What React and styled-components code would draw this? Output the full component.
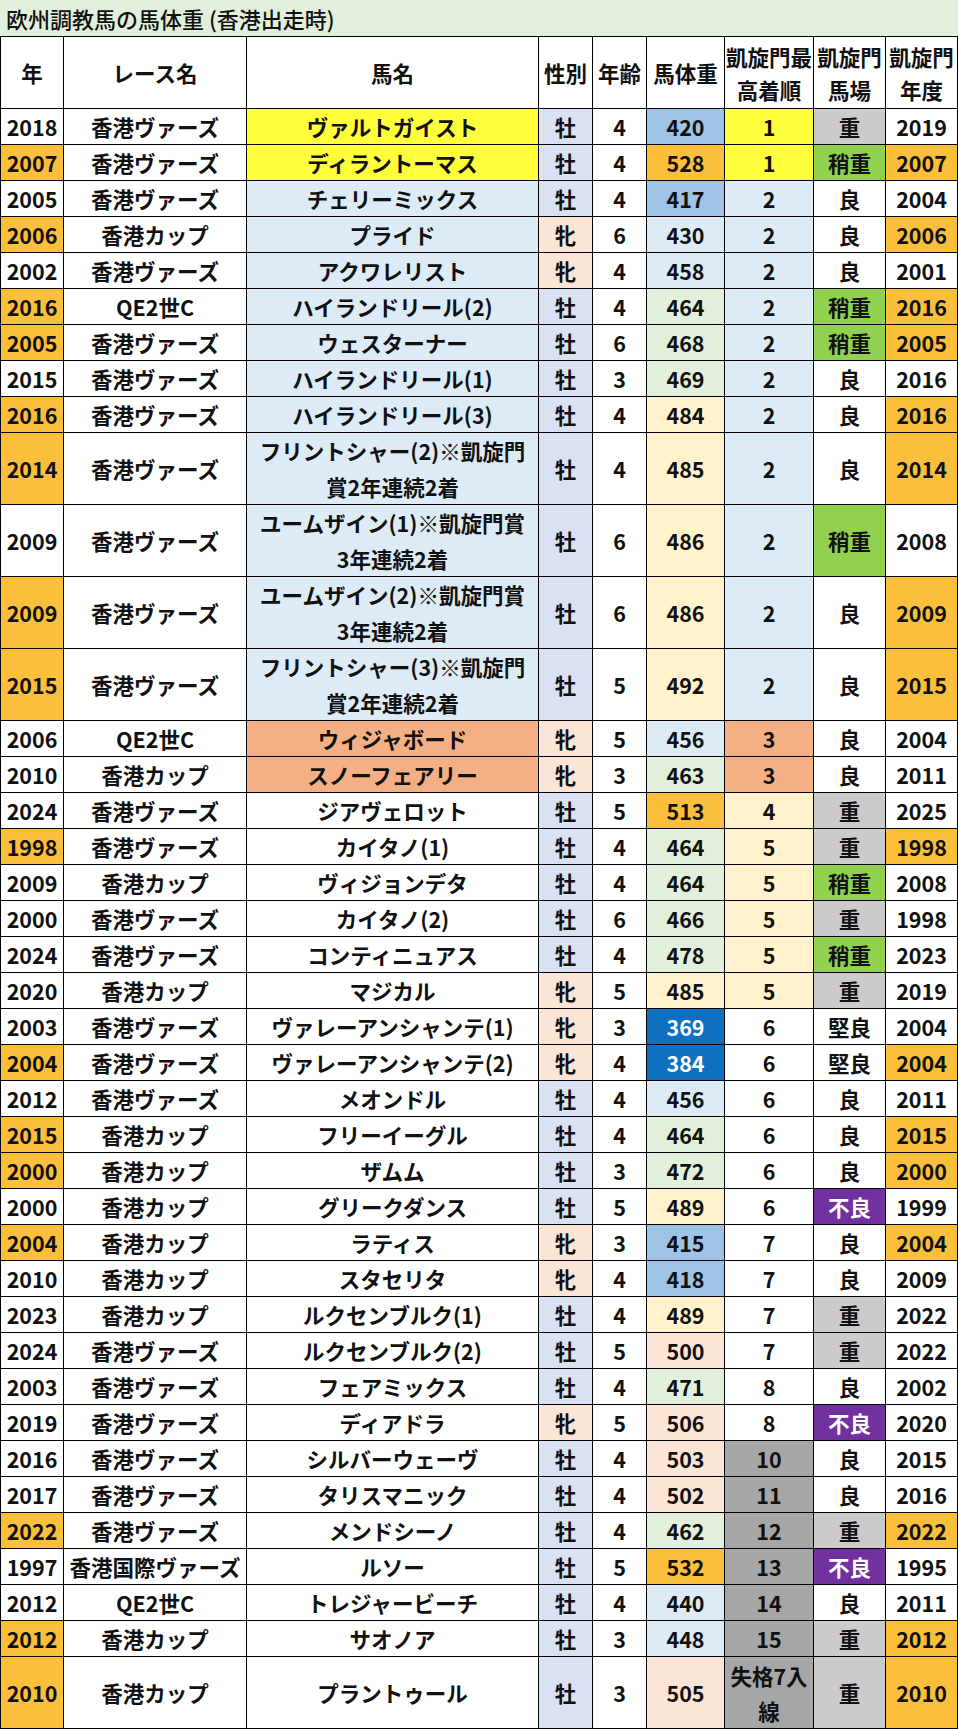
import styled, { createGlobalStyle } from "styled-components";

const GlobalStyle = createGlobalStyle`
  body {
    margin: 0;
    background: #fff;
    color: #000;
    font-family: "Noto Sans CJK JP", "Noto Sans", sans-serif;
  }
`;

const COLS = "63px 183px 292px 54px 54px 78px 89px 72px 72px";

const YELLOW = "#ffff3c";
const LIGHT_BLUE = "#ddebf7";
const SALMON = "#f4b084";
const CREAM = "#fff2cc";
const GOLD = "#fbbf3c";

// year, race, horse, sex, age, weight, place, track, arc year
const rows = [
  [2018, "香港ヴァーズ", "ヴァルトガイスト", "牡", 4, 420, 1, "重", 2019],
  [2007, "香港ヴァーズ", "ディラントーマス", "牡", 4, 528, 1, "稍重", 2007],
  [2005, "香港ヴァーズ", "チェリーミックス", "牡", 4, 417, 2, "良", 2004],
  [2006, "香港カップ", "プライド", "牝", 6, 430, 2, "良", 2006],
  [2002, "香港ヴァーズ", "アクワレリスト", "牝", 4, 458, 2, "良", 2001],
  [2016, "QE2世C", "ハイランドリール(2)", "牡", 4, 464, 2, "稍重", 2016],
  [2005, "香港ヴァーズ", "ウェスターナー", "牡", 6, 468, 2, "稍重", 2005],
  [2015, "香港ヴァーズ", "ハイランドリール(1)", "牡", 3, 469, 2, "良", 2016],
  [2016, "香港ヴァーズ", "ハイランドリール(3)", "牡", 4, 484, 2, "良", 2016],
  [2014, "香港ヴァーズ", ["フリントシャー(2)※凱旋門", "賞2年連続2着"], "牡", 4, 485, 2, "良", 2014],
  [2009, "香港ヴァーズ", ["ユームザイン(1)※凱旋門賞", "3年連続2着"], "牡", 6, 486, 2, "稍重", 2008],
  [2009, "香港ヴァーズ", ["ユームザイン(2)※凱旋門賞", "3年連続2着"], "牡", 6, 486, 2, "良", 2009],
  [2015, "香港ヴァーズ", ["フリントシャー(3)※凱旋門", "賞2年連続2着"], "牡", 5, 492, 2, "良", 2015],
  [2006, "QE2世C", "ウィジャボード", "牝", 5, 456, 3, "良", 2004],
  [2010, "香港カップ", "スノーフェアリー", "牝", 3, 463, 3, "良", 2011],
  [2024, "香港ヴァーズ", "ジアヴェロット", "牡", 5, 513, 4, "重", 2025],
  [1998, "香港ヴァーズ", "カイタノ(1)", "牡", 4, 464, 5, "重", 1998],
  [2009, "香港カップ", "ヴィジョンデタ", "牡", 4, 464, 5, "稍重", 2008],
  [2000, "香港ヴァーズ", "カイタノ(2)", "牡", 6, 466, 5, "重", 1998],
  [2024, "香港ヴァーズ", "コンティニュアス", "牡", 4, 478, 5, "稍重", 2023],
  [2020, "香港カップ", "マジカル", "牝", 5, 485, 5, "重", 2019],
  [2003, "香港ヴァーズ", "ヴァレーアンシャンテ(1)", "牝", 3, 369, 6, "堅良", 2004],
  [2004, "香港ヴァーズ", "ヴァレーアンシャンテ(2)", "牝", 4, 384, 6, "堅良", 2004],
  [2012, "香港ヴァーズ", "メオンドル", "牡", 4, 456, 6, "良", 2011],
  [2015, "香港カップ", "フリーイーグル", "牡", 4, 464, 6, "良", 2015],
  [2000, "香港カップ", "ザムム", "牡", 3, 472, 6, "良", 2000],
  [2000, "香港カップ", "グリークダンス", "牡", 5, 489, 6, "不良", 1999],
  [2004, "香港カップ", "ラティス", "牝", 3, 415, 7, "良", 2004],
  [2010, "香港カップ", "スタセリタ", "牝", 4, 418, 7, "良", 2009],
  [2023, "香港カップ", "ルクセンブルク(1)", "牡", 4, 489, 7, "重", 2022],
  [2024, "香港ヴァーズ", "ルクセンブルク(2)", "牡", 5, 500, 7, "重", 2022],
  [2003, "香港ヴァーズ", "フェアミックス", "牡", 4, 471, 8, "良", 2002],
  [2019, "香港ヴァーズ", "ディアドラ", "牝", 5, 506, 8, "不良", 2020],
  [2016, "香港ヴァーズ", "シルバーウェーヴ", "牡", 4, 503, 10, "良", 2015],
  [2017, "香港ヴァーズ", "タリスマニック", "牡", 4, 502, 11, "良", 2016],
  [2022, "香港ヴァーズ", "メンドシーノ", "牡", 4, 462, 12, "重", 2022],
  [1997, "香港国際ヴァーズ", "ルソー", "牡", 5, 532, 13, "不良", 1995],
  [2012, "QE2世C", "トレジャービーチ", "牡", 4, 440, 14, "良", 2011],
  [2012, "香港カップ", "サオノア", "牡", 3, 448, 15, "重", 2012],
  [2010, "香港カップ", "プラントゥール", "牡", 3, 505, ["失格7入", "線"], "重", 2010],
];

function weightColor(w) {
  if (w < 400) return "#1070c0";
  if (w < 430) return "#9dc3e6";
  if (w < 460) return LIGHT_BLUE;
  if (w < 480) return "#e2efda";
  if (w < 500) return CREAM;
  if (w < 510) return "#fce4d6";
  return GOLD;
}

function placeColor(p) {
  if (typeof p !== "number") return "#a6a6a6";
  if (p === 1) return YELLOW;
  if (p === 2) return LIGHT_BLUE;
  if (p === 3) return SALMON;
  if (p <= 5) return CREAM;
  if (p <= 8) return "#fff";
  return "#a6a6a6";
}

function nameColor(p) {
  if (p === 1) return YELLOW;
  if (p === 2) return LIGHT_BLUE;
  if (p === 3) return SALMON;
  return "#fff";
}

const trackColor = {
  重: "#cbcbcb",
  稍重: "#92d050",
  不良: "#7030a0",
};

function Text({ value, lh }) {
  if (!Array.isArray(value)) return value;
  return (
    <Lines $lh={lh}>
      {value.map((line) => (
        <span key={line}>{line}</span>
      ))}
    </Lines>
  );
}

export default function App() {
  return (
    <Page>
      <GlobalStyle />
      <Title>欧州調教馬の馬体重 (香港出走時)</Title>
      <Table>
        <Row $h={72}>
          <Cell>年</Cell>
          <Cell>レース名</Cell>
          <Cell>馬名</Cell>
          <Cell>性別</Cell>
          <Cell>年齢</Cell>
          <Cell>馬体重</Cell>
          <Cell><Text value={["凱旋門最", "高着順"]} lh={33} /></Cell>
          <Cell><Text value={["凱旋門", "馬場"]} lh={33} /></Cell>
          <Cell><Text value={["凱旋門", "年度"]} lh={33} /></Cell>
        </Row>
        {rows.map((r, i) => {
          const [year, race, horse, sex, age, weight, place, track, arc] = r;
          const tall = Array.isArray(horse) || Array.isArray(place);
          const same = year === arc;
          return (
            <Row key={i} $h={tall ? 72 : 36}>
              <Cell $bg={same ? GOLD : "#fff"}>{year}</Cell>
              <Cell>{race}</Cell>
              <Cell $bg={nameColor(place)}><Text value={horse} lh={36} /></Cell>
              <Cell $bg={sex === "牝" ? "#fce4d6" : "#d9e1f2"}>{sex}</Cell>
              <Cell>{age}</Cell>
              <Cell $bg={weightColor(weight)} $light={weight < 400}>{weight}</Cell>
              <Cell $bg={placeColor(place)}><Text value={place} lh={35} /></Cell>
              <Cell $bg={trackColor[track] || "#fff"} $light={track === "不良"}>{track}</Cell>
              <Cell $bg={same ? GOLD : "#fff"}>{arc}</Cell>
            </Row>
          );
        })}
      </Table>
    </Page>
  );
}

const Page = styled.div`
  width: 958px;
`;

const Title = styled.div`
  height: 36px;
  padding-left: 6px;
  display: flex;
  align-items: center;
  background: #e2efda;
  font-size: 22px;
  font-weight: 500;
  color: #111;
`;

const Table = styled.div`
  width: max-content;
  border-left: 1px solid #000;
  border-top: 1px solid #000;
`;

const Row = styled.div`
  display: grid;
  grid-template-columns: ${COLS};
  height: ${(p) => p.$h}px;
`;

const Cell = styled.div`
  box-sizing: border-box;
  display: flex;
  align-items: center;
  justify-content: center;
  text-align: center;
  overflow: hidden;
  white-space: nowrap;
  border-right: 1px solid #000;
  border-bottom: 1px solid #000;
  background: ${(p) => p.$bg || "#fff"};
  color: ${(p) => (p.$light ? "#fff" : "#111")};
  font-size: 21.5px;
  font-weight: 700;
`;

const Lines = styled.span`
  display: flex;
  flex-direction: column;
  align-items: center;
  line-height: ${(p) => p.$lh}px;
`;
